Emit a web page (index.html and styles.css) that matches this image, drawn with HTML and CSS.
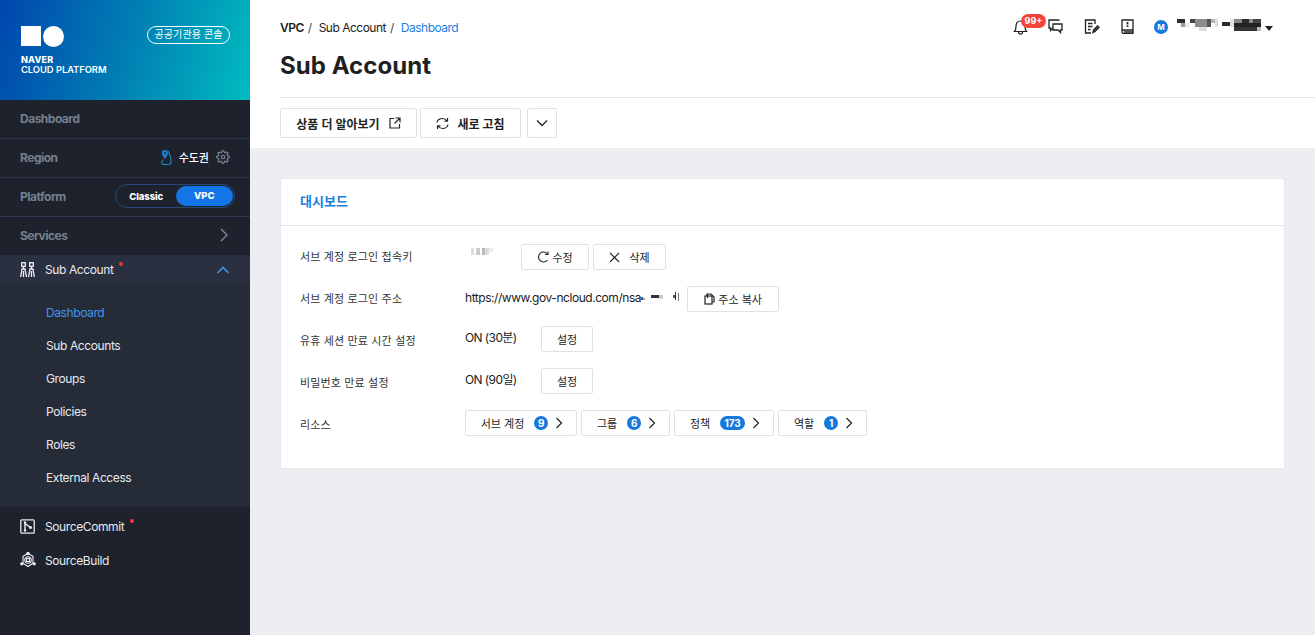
FILE: index.html
```html
<!DOCTYPE html>
<html lang="ko">
<head>
    <meta charset="utf-8">
    <title>Sub Account</title>
    <link rel="stylesheet" href="styles.css">
</head>
<body>
<div class="app">
    <aside class="side">
        <div class="brand">
            <div class="logo">
                <div class="logo-mark"><span class="logo-sq"></span><span class="logo-dot"></span></div>
                <div class="logo-t1">NAVER</div>
                <div class="logo-t2">CLOUD PLATFORM</div>
            </div>
            <span class="gov-pill">공공기관용 콘솔</span>
        </div>
        <div class="side-row"><span class="side-label">Dashboard</span></div>
        <div class="side-row">
            <span class="side-label">Region</span>
            <div class="region">
                <svg width="11" height="15" viewBox="0 0 11 15" fill="none"><path d="M2 9.500C.8 11 .6 13 1.200 14.200C3 14.800 7 14.800 9.800 14C10.500 10.500 9.500 4.500 7 1" stroke="#1f9fd8" stroke-width="1"/><path d="M4 0C2 0 .8 1.300 .8 3C.8 5 3 7.500 4 9C5 7.500 7 5 7 3C7 1.300 6 0 4 0Z" fill="#1c7fd0"/><circle cx="3.900" cy="2.900" r="1" fill="#1e222d"/></svg>
                <span class="region-name">수도권</span>
                <svg width="14" height="14" viewBox="0 0 24 24" fill="none" stroke="#7d8899" stroke-width="2"><circle cx="12" cy="12" r="3"/><path d="M19.400 15a1.650 1.650 0 0 0 .33 1.820l.06.06a2 2 0 0 1 0 2.830 2 2 0 0 1-2.830 0l-.06-.06a1.650 1.650 0 0 0-1.820-.33 1.650 1.650 0 0 0-1 1.510V21a2 2 0 0 1-2 2 2 2 0 0 1-2-2v-.09A1.650 1.650 0 0 0 9 19.400a1.650 1.650 0 0 0-1.820.33l-.06.06a2 2 0 0 1-2.830 0 2 2 0 0 1 0-2.830l.06-.06a1.650 1.650 0 0 0 .33-1.820 1.650 1.650 0 0 0-1.510-1H3a2 2 0 0 1-2-2 2 2 0 0 1 2-2h.09A1.650 1.650 0 0 0 4.600 9a1.650 1.650 0 0 0-.33-1.820l-.06-.06a2 2 0 0 1 0-2.830 2 2 0 0 1 2.830 0l.06.06a1.650 1.650 0 0 0 1.820.33H9a1.650 1.650 0 0 0 1-1.510V3a2 2 0 0 1 2-2 2 2 0 0 1 2 2v.09a1.650 1.650 0 0 0 1 1.510 1.650 1.650 0 0 0 1.820-.33l.06-.06a2 2 0 0 1 2.830 0 2 2 0 0 1 0 2.830l-.06.06a1.650 1.650 0 0 0-.33 1.820V9a1.650 1.650 0 0 0 1.510 1H21a2 2 0 0 1 2 2 2 2 0 0 1-2 2h-.09a1.650 1.650 0 0 0-1.510 1z"/></svg>
            </div>
        </div>
        <div class="side-row">
            <span class="side-label">Platform</span>
            <div class="switch"><span class="switch-off">Classic</span><span class="switch-on">VPC</span></div>
        </div>
        <div class="side-row no-line">
            <span class="side-label">Services</span>
            <svg class="side-chev" width="10" height="14" viewBox="0 0 10 14" fill="none" stroke="#7d8899" stroke-width="1.400"><path d="M2 1l6 6-6 6"/></svg>
        </div>
        <div class="prod prod-open">
            <svg width="15" height="16" viewBox="0 0 15 16" fill="none" stroke="#f0f1f4" stroke-width="1.300"><rect x="1.700" y=".7" width="3.600" height="3.600"/><rect x="9.700" y=".7" width="3.600" height="3.600"/><path d="M3.500 4.500v2M.7 15l1.300-8h3l1.500 8M3.500 9v6M11.500 4.500v2M8.500 15l1.500-8h3l1.300 8M11.500 9v6"/></svg>
            <span class="prod-name">Sub Account</span><span class="red-dot"></span>
            <svg class="prod-chev" width="14" height="10" viewBox="0 0 14 10" fill="none" stroke="#3f93ee" stroke-width="1.600"><path d="M1.500 8L7 2.500 12.500 8"/></svg>
        </div>
        <ul class="submenu">
            <li class="active">Dashboard</li>
            <li>Sub Accounts</li>
            <li>Groups</li>
            <li>Policies</li>
            <li>Roles</li>
            <li>External Access</li>
        </ul>
        <div class="prod prod-commit">
            <svg width="15" height="15" viewBox="0 0 15 15" fill="none"><rect x=".8" y=".8" width="13.400" height="13.400" stroke="#e8eaee" stroke-width="1.300" rx="1"/><path d="M5 3v9M5 4.500L10.500 8.500" stroke="#f0f1f4" stroke-width="1.400"/><circle cx="5" cy="3.500" r="1.200" fill="#f0f1f4"/><circle cx="5" cy="11.500" r="1.200" fill="#f0f1f4"/><circle cx="10.500" cy="8.500" r="1.500" fill="#f0f1f4"/></svg>
            <span class="prod-name">SourceCommit</span><span class="red-dot"></span>
        </div>
        <div class="prod prod-build">
            <svg width="16" height="16" viewBox="0 0 16 16" fill="none" stroke="#f0f1f4" stroke-width="1.100"><path d="M8 1.500l5 2.800v6.900L8 14.500 3 11.200V4.300z"/><circle cx="8" cy="8" r="3.300"/><rect x="6.500" y="6.500" width="3" height="3"/><circle cx="8" cy="1.500" r="1.100" fill="#f0f1f4"/><circle cx="1.800" cy="11.800" r="1.100" fill="#f0f1f4"/><circle cx="14.200" cy="11.800" r="1.100" fill="#f0f1f4"/></svg>
            <span class="prod-name">SourceBuild</span>
        </div>
    </aside>

    <main class="main">
        <header class="top">
            <div class="top-head">
                <div class="crumbs">
                    <b>VPC</b><i>/</i><span>Sub Account</span><i>/</i><a>Dashboard</a>
                </div>
                <div class="tools">
                    <div class="bell">
                        <svg width="15" height="16" viewBox="0 0 15 16" fill="none" stroke="#222" stroke-width="1.200"><path d="M1.500 12.500c1-1 1.500-2 1.500-5C3 4 5 2 7.500 2S12 4 12 7.500c0 3 .5 4 1.500 5zM5.500 13c0 1.500 1 2.200 2 2.200s2-.7 2-2.200"/></svg>
                        <span class="bell-count">99+</span>
                    </div>
                    <svg class="tool-chat" width="15" height="15" viewBox="0 0 15 15" fill="none" stroke="#222" stroke-width="1.300"><path d="M11.500 1H1v8h1.500v2.500L5 9"/><path d="M5 5h9v6h-1.500v2.500L10 11H5z"/></svg>
                    <svg class="tool-note" width="16" height="15" viewBox="0 0 16 15" fill="none" stroke="#222" stroke-width="1.300"><path d="M11 5V1H1.500v13H7"/><path d="M4 4.500h4.500M4 7.500h4.500M4 10.500h2.500"/><path d="M9 13.500l.5-2.500 4-4 1.500 1.500-4 4z" fill="#555"/></svg>
                    <svg class="tool-book" width="13" height="15" viewBox="0 0 13 15" fill="none" stroke="#222" stroke-width="1.300"><path d="M1 12V1h11v13.500H2.500C1.500 14.500 1 13.500 1 12.500s.5-1.500 1.500-1.500H12M3 12.800h9"/><path d="M6.500 3v2.500M6.500 6.500v1.500" stroke-width="1.800"/></svg>
                    <span class="avatar">M</span>
                    <svg class="mosaic-user" width="88" height="14" viewBox="0 0 88 14"><rect x="0" y="1" width="8" height="4" fill="#2e2e2e"/><rect x="4" y="5" width="4" height="4" fill="#999"/><rect x="8" y="5" width="4" height="4" fill="#e8e8e8"/><rect x="13" y="1" width="5" height="4" fill="#444"/><rect x="18" y="1" width="12" height="8" fill="#8c8c8c"/><rect x="22" y="9" width="8" height="4" fill="#ddd"/><rect x="30" y="1" width="4" height="8" fill="#555"/><rect x="34" y="1" width="4" height="4" fill="#b5b5b5"/><rect x="38" y="1" width="3" height="8" fill="#ddd"/><rect x="45" y="4" width="8" height="4" fill="#2a2a2a"/><rect x="53" y="1" width="4" height="8" fill="#e2e2e2"/><rect x="57" y="1" width="8" height="4" fill="#888"/><rect x="65" y="1" width="7" height="6" fill="#2a2a2a"/><rect x="72" y="1" width="4" height="4" fill="#888"/><rect x="76" y="1" width="8" height="4" fill="#444"/><rect x="57" y="5" width="27" height="4" fill="#222"/><rect x="57" y="9" width="23" height="4" fill="#333"/><rect x="80" y="9" width="4" height="4" fill="#bbb"/></svg>
                    <span class="caret"></span>
                </div>
            </div>
            <h1 class="title">Sub Account</h1>
            <div class="actions">
                <button class="btn btn-strong btn-more">상품 더 알아보기
                    <svg width="12" height="12" viewBox="0 0 12 12" fill="none" stroke="#222" stroke-width="1.200"><path d="M5 1.500H1v9.500h9.500V7M6.500 1h4.500v4.500M11 1L5.500 6.500"/></svg>
                </button>
                <button class="btn btn-strong btn-refresh">
                    <svg width="13" height="13" viewBox="0 0 13 13" fill="none" stroke="#222" stroke-width="1.200"><path d="M1 5.500C1.500 3 3.500 1.500 6.500 1.500c2 0 3.500 1 4.500 2.500M12 7.500c-.5 2.500-2.500 4-5.500 4-2 0-3.500-1-4.500-2.500"/><path d="M11.500 1v3.200H8.500M1.500 12V8.800h3"/></svg>
                    <span>새로 고침</span>
                </button>
                <button class="btn btn-drop">
                    <svg width="12" height="8" viewBox="0 0 12 8" fill="none" stroke="#222" stroke-width="1.300"><path d="M1 1.500l5 5 5-5"/></svg>
                </button>
            </div>
        </header>

        <section class="content">
            <div class="card">
                <h2 class="card-title">대시보드</h2>
                <div class="card-body">
                    <div class="info info-key">
                        <div class="info-label">서브 계정 로그인 접속키</div>
                        <svg class="mosaic-key" width="24" height="10" viewBox="0 0 24 10"><rect x="0" y="1" width="3" height="7" fill="#ddd"/><rect x="5" y="1" width="4" height="7" fill="#ccc"/><rect x="11" y="1" width="3" height="7" fill="#bbb"/><rect x="14" y="1" width="4" height="7" fill="#ddd"/><rect x="18" y="1" width="4" height="4" fill="#eee"/></svg>
                        <button class="btn btn-edit">
                            <svg width="12" height="12" viewBox="0 0 12 12" fill="none" stroke="#222" stroke-width="1.100"><path d="M10.500 3A5 5 0 1 0 10.500 9"/><path d="M11 .5V3.500H8"/></svg>
                            <span>수정</span>
                        </button>
                        <button class="btn btn-del">
                            <svg width="11" height="11" viewBox="0 0 11 11" fill="none" stroke="#222" stroke-width="1.100"><path d="M1 1l9 9M10 1l-9 9"/></svg>
                            <span>삭제</span>
                        </button>
                    </div>
                    <div class="info info-url">
                        <div class="info-label">서브 계정 로그인 주소</div>
                        <span class="info-value">https://www.gov-ncloud.com/nsa</span>
                        <svg class="mosaic-url" width="38" height="10" viewBox="0 0 38 10"><rect x="0" y="5" width="2" height="3" fill="#555"/><rect x="2" y="6" width="2" height="2" fill="#aaa"/><rect x="10" y="3" width="8" height="3" fill="#333"/><rect x="18" y="3" width="4" height="4" fill="#ccc"/><rect x="32" y="3" width="3" height="3" fill="#555"/><rect x="34" y="0" width="1" height="8" fill="#333"/><rect x="37" y="1" width="1" height="8" fill="#777"/></svg>
                        <button class="btn btn-copy">
                            <svg width="11" height="12" viewBox="0 0 11 12" fill="none" stroke="#222" stroke-width="1.200"><path d="M3 3V1h4l3 3v5H8"/><rect x="1" y="3" width="7" height="8" fill="#fff"/><path d="M3.500 1.200V5"/></svg>
                            <span>주소 복사</span>
                        </button>
                    </div>
                    <div class="info info-low">
                        <div class="info-label">유휴 세션 만료 시간 설정</div>
                        <span class="info-value info-on">ON (30분)</span>
                        <button class="btn btn-set">설정</button>
                    </div>
                    <div class="info info-low">
                        <div class="info-label">비밀번호 만료 설정</div>
                        <span class="info-value info-on">ON (90일)</span>
                        <button class="btn btn-set">설정</button>
                    </div>
                    <div class="info info-low">
                        <div class="info-label">리소스</div>
                        <div class="res-list">
                            <button class="btn res res-sub">서브 계정 <em class="count">9</em><svg width="8" height="12" viewBox="0 0 8 12" fill="none" stroke="#222" stroke-width="1.200"><path d="M1.500 1l5 5-5 5"/></svg></button>
                            <button class="btn res res-group">그룹 <em class="count">6</em><svg width="8" height="12" viewBox="0 0 8 12" fill="none" stroke="#222" stroke-width="1.200"><path d="M1.500 1l5 5-5 5"/></svg></button>
                            <button class="btn res res-policy">정책 <em class="count count-wide">173</em><svg width="8" height="12" viewBox="0 0 8 12" fill="none" stroke="#222" stroke-width="1.200"><path d="M1.500 1l5 5-5 5"/></svg></button>
                            <button class="btn res res-role">역할 <em class="count">1</em><svg width="8" height="12" viewBox="0 0 8 12" fill="none" stroke="#222" stroke-width="1.200"><path d="M1.500 1l5 5-5 5"/></svg></button>
                        </div>
                    </div>
                </div>
            </div>
        </section>
    </main>
</div>
</body>
</html>
```

FILE: styles.css
```css
* { box-sizing: border-box; }
html, body { margin: 0; height: 100%; overflow: hidden; }
body { font-family: Inter, "Noto Sans CJK KR", sans-serif; font-size: 12px; color: #222; background: #eceef2; }
.app { display: flex; height: 635px; }

/* sidebar */
.side { width: 250px; flex: none; background: #1e222d; }
.brand { height: 100px; padding: 26px 20px 0 21px; display: flex; justify-content: space-between; align-items: flex-start; background: linear-gradient(105deg, #0046ad 0%, #0084b4 55%, #00bcc0 100%); color: #fff; }
.logo-mark { display: flex; height: 21px; }
.logo-sq { width: 20px; height: 20px; background: #fff; }
.logo-dot { width: 21px; height: 21px; border-radius: 50%; background: #fff; margin-left: 2px; }
.logo-t1 { font-size: 9px; line-height: 10px; font-weight: 800; margin-top: 8px; letter-spacing: .2px; }
.logo-t2 { font-size: 9.300px; line-height: 10px; font-weight: 600; }
.gov-pill { height: 18px; line-height: 15px; margin-left: 1px; padding: 0 6.500px; border: 1px solid #fff; border-radius: 9px; font-size: 10px; letter-spacing: .1px; }
.side-row { height: 39px; padding: 0 20px 2px; display: flex; align-items: center; justify-content: space-between; border-bottom: 1px solid #2d3750; }
.side-row.no-line { height: 38px; border-bottom: 0; }
.side-label { color: #74808f; font-size: 12px; font-weight: 700; letter-spacing: -.5px; }
.region { display: flex; align-items: center; }
.region-name { color: #fff; font-size: 11px; font-weight: 500; margin: 0 7px 0 7px; }
.switch { width: 120px; height: 24px; margin-right: -5px; border: 1px solid #234a78; border-radius: 12px; display: flex; align-items: center; padding: 1px; color: #fff; font-size: 9.500px; font-weight: 800; letter-spacing: -.1px; }
.switch-off { width: 59px; text-align: center; }
.switch-on { width: 58px; height: 20px; line-height: 20px; background: #1476e6; border-radius: 10px; text-align: center; }
.side-chev { margin-right: 1px; }
.prod { display: flex; align-items: center; padding: 0 20px; color: #e8eaee; }
.prod-name { margin-left: 10px; font-size: 12px; letter-spacing: -.4px; }
.prod-open { height: 29px; background: #2a3040; }
.prod-chev { margin-left: auto; }
.red-dot { width: 4px; height: 4px; border-radius: 50%; background: #f2392e; margin: -11px 0 0 6px; }
.submenu { list-style: none; margin: 0; padding: 12px 0 13px 46px; height: 223px; background: #252b37; color: #e8eaee; font-size: 12px; letter-spacing: -.4px; }
.submenu li { height: 33px; line-height: 33px; }
.submenu .active { color: #3f97ee; }
.prod-commit { height: 33px; margin-top: 3px; }
.prod-build { height: 34px; }
.prod-build .prod-name { margin-left: 9px; }

/* top area */
.main { flex: 1; min-width: 0; display: flex; flex-direction: column; }
.top { height: 148px; padding: 0 0 0 30px; background: #fff; flex: none; }
.top-head { height: 47px; padding-top: 18px; display: flex; justify-content: space-between; }
.crumbs { font-size: 12px; line-height: 19px; display: flex; letter-spacing: -.5px; }
.crumbs b { font-weight: 600; }
.crumbs i { font-style: normal; margin: 0 7px 0 4px; color: #444; }
.crumbs a { color: #1a7fe0; }
.tools { display: flex; align-items: flex-start; margin-right: 42px; height: 19px; }
.bell { position: relative; width: 28px; padding-top: 1px; }
.bell svg { margin-left: -1px; }
.bell-count { position: absolute; left: 7px; top: -4px; width: 25px; height: 14px; line-height: 14px; border-radius: 7px; background: #f5453b; color: #fff; font-size: 9px; font-weight: 700; text-align: center; }
.tool-chat { margin: 1px 0 0 6px; }
.tool-note { margin: 1px 0 0 21px; }
.tool-book { margin: 1px 0 0 21px; }
.avatar { width: 14px; height: 14px; margin: 2px 0 0 20px; border-radius: 50%; background: #1478dc; color: #fff; font-size: 8px; font-weight: 700; line-height: 14px; text-align: center; }
.mosaic-user { margin: 0 0 0 9px; }
.caret { width: 0; height: 0; margin: 8px 0 0 0; border: 4px solid transparent; border-top: 5px solid #222; border-bottom: 0; }
.title { margin: 0; height: 51px; padding-top: 4px; font-size: 24px; line-height: 30px; font-weight: 700; color: #1f1f1f; border-bottom: 1px solid #e2e2e2; letter-spacing: .05px; }
.actions { display: flex; margin-top: 10px; gap: 3px; }

/* buttons */
.btn { height: 26px; padding: 0; display: inline-flex; align-items: center; justify-content: center; background: #fff; border: 1px solid #dfe1e5; border-radius: 2px; color: #222; font: inherit; font-size: 11px; }
.btn-strong { height: 30px; font-size: 12px; font-weight: 600; }
.btn-more { width: 137px; gap: 9px; }
.btn-refresh { width: 101px; gap: 8px; }
.btn-drop { width: 30px; height: 30px; margin-left: 3px; }

/* content */
.content { flex: 1; padding: 30px 30px 0; }
.card { height: 291px; background: #fff; border: 1px solid #e6e8ec; border-radius: 2px; }
.card-title { margin: 0; height: 47px; padding: 0 19px; font-size: 13px; line-height: 44px; font-weight: 600; color: #1a7fe0; border-bottom: 1px solid #e2e2e2; }
.card-body { padding: 18px 19px 0; }
.info { height: 42px; display: flex; align-items: flex-start; font-size: 12px; }
.info-url { height: 40px; }
.info-label { width: 165px; flex: none; font-size: 11px; line-height: 26px; letter-spacing: .15px; color: #333; }
.info-low .info-label { padding-top: 2px; }
.info-value { font-size: 12px; line-height: 24px; letter-spacing: -.45px; }
.info-on { width: 76px; flex: none; letter-spacing: -.6px; }
.mosaic-key { margin: 3px 0 0 6px; }
.btn-edit { width: 68px; gap: 3px; margin-left: 26px; }
.btn-del { width: 73px; gap: 9px; margin-left: 4px; }
.mosaic-url { margin: 6px 0 0 0; }
.btn-copy { width: 92px; gap: 3px; margin-left: 8px; }
.btn-set { width: 52px; }
.res-list { display: flex; gap: 4px; }
.res { gap: 5px; padding-left: 2px; }
.res-sub { width: 112px; }
.res-group { width: 89px; }
.res-policy { width: 100px; }
.res-role { width: 89px; }
.count { min-width: 14px; height: 14px; border-radius: 7px; background: #1478dc; color: #fff; font-size: 10px; font-weight: 700; font-style: normal; line-height: 14px; text-align: center; margin: 0 2px 0 5px; }
.count-wide { width: 25px; }
```
